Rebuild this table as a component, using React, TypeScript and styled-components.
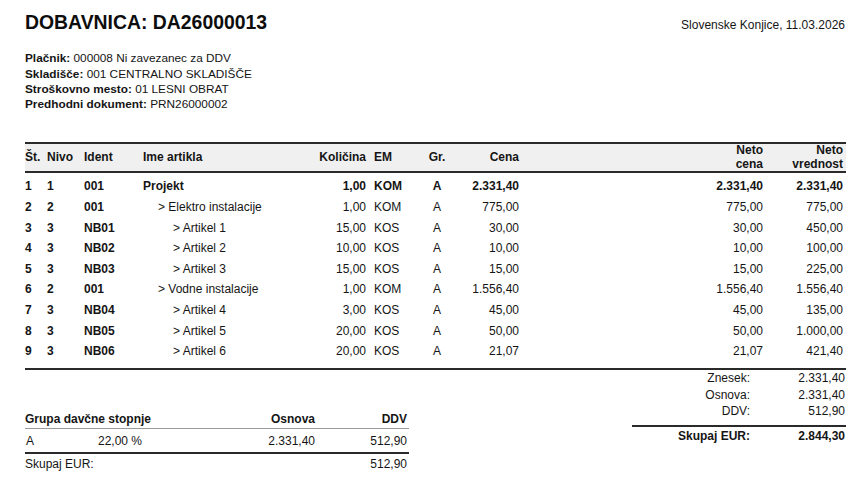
import React from 'react';
import styled, { createGlobalStyle } from 'styled-components';

const GlobalStyle = createGlobalStyle`
  html, body {
    margin: 0;
    padding: 0;
    background: #fff;
  }
  body {
    font-family: 'Liberation Sans', Arial, sans-serif;
    color: #151515;
  }
`;

type Item = {
  st: number;
  level: number;
  ident: string;
  name: string;
  qty: string;
  em: string;
  gr: string;
  price: string;
  netPrice: string;
  netValue: string;
};

const items: Item[] = [
  { st: 1, level: 1, ident: '001', name: 'Projekt', qty: '1,00', em: 'KOM', gr: 'A', price: '2.331,40', netPrice: '2.331,40', netValue: '2.331,40' },
  { st: 2, level: 2, ident: '001', name: 'Elektro instalacije', qty: '1,00', em: 'KOM', gr: 'A', price: '775,00', netPrice: '775,00', netValue: '775,00' },
  { st: 3, level: 3, ident: 'NB01', name: 'Artikel 1', qty: '15,00', em: 'KOS', gr: 'A', price: '30,00', netPrice: '30,00', netValue: '450,00' },
  { st: 4, level: 3, ident: 'NB02', name: 'Artikel 2', qty: '10,00', em: 'KOS', gr: 'A', price: '10,00', netPrice: '10,00', netValue: '100,00' },
  { st: 5, level: 3, ident: 'NB03', name: 'Artikel 3', qty: '15,00', em: 'KOS', gr: 'A', price: '15,00', netPrice: '15,00', netValue: '225,00' },
  { st: 6, level: 2, ident: '001', name: 'Vodne instalacije', qty: '1,00', em: 'KOM', gr: 'A', price: '1.556,40', netPrice: '1.556,40', netValue: '1.556,40' },
  { st: 7, level: 3, ident: 'NB04', name: 'Artikel 4', qty: '3,00', em: 'KOS', gr: 'A', price: '45,00', netPrice: '45,00', netValue: '135,00' },
  { st: 8, level: 3, ident: 'NB05', name: 'Artikel 5', qty: '20,00', em: 'KOS', gr: 'A', price: '50,00', netPrice: '50,00', netValue: '1.000,00' },
  { st: 9, level: 3, ident: 'NB06', name: 'Artikel 6', qty: '20,00', em: 'KOS', gr: 'A', price: '21,07', netPrice: '21,07', netValue: '421,40' },
];

const Page = styled.div`
  width: 821px;
  padding: 11px 0 0 25px;
  font-size: 12px;
`;

const Head = styled.div`
  display: flex;
  justify-content: space-between;
  align-items: baseline;
`;

const Title = styled.h1`
  margin: 0;
  font-size: 19.4px;
  line-height: 22px;
  font-weight: bold;
  color: #0d0d0d;
`;

const Place = styled.div`
  font-size: 12px;
  padding-right: 1px;
`;

const Info = styled.div`
  margin-top: 18.4px;
  line-height: 15.3px;
  font-size: 11.8px;
`;

const InfoLine = styled.div`
  b {
    font-weight: bold;
  }
`;

const Cols = `22px 37px 59px 160px 63px 54px 34px 66px 1fr 64px 82px`;

const ItemTable = styled.div`
  margin-top: 29.3px;
  border-bottom: 2px solid #2a2a2a;
  padding-bottom: 6px;
`;

const HeaderRow = styled.div`
  display: grid;
  grid-template-columns: ${Cols};
  height: 27.5px;
  align-items: center;
  background: #f0f0f0;
  border-top: 2px solid #2a2a2a;
  border-bottom: 2px solid #2a2a2a;
  font-weight: bold;
  line-height: 13.75px;
  margin-bottom: 3px;
`;

const BodyRow = styled.div<{ $bold?: boolean }>`
  display: grid;
  grid-template-columns: ${Cols};
  height: 20.6px;
  line-height: 20.6px;
  font-weight: ${(p) => (p.$bold ? 'bold' : 'normal')};
  white-space: nowrap;
`;

const Cell = styled.div<{ $align?: 'left' | 'right' | 'center'; $bold?: boolean; $pad?: number }>`
  text-align: ${(p) => p.$align || 'left'};
  font-weight: ${(p) => (p.$bold ? 'bold' : 'inherit')};
  padding-left: ${(p) => (p.$align === 'left' || !p.$align ? p.$pad || 0 : 0)}px;
  padding-right: ${(p) => (p.$align === 'right' ? p.$pad || 0 : 0)}px;
  white-space: nowrap;
`;

const Bottom = styled.div`
  display: flex;
  justify-content: space-between;
  align-items: flex-start;
`;

const TaxTable = styled.div`
  width: 384px;
  margin-top: 40.8px;
  line-height: 16px;
`;

const TaxCols = `73px 44px 173px 1fr`;

const TaxHead = styled.div`
  display: grid;
  grid-template-columns: ${TaxCols};
  font-weight: bold;
  padding-bottom: 1px;
  border-bottom: 1px solid #9a9a9a;
`;

const TaxRow = styled.div`
  display: grid;
  grid-template-columns: ${TaxCols};
  padding: 4px 0 3.2px;
  border-bottom: 2px solid #2a2a2a;
`;

const TaxTotal = styled.div`
  display: flex;
  justify-content: space-between;
  padding: 1.8px 2px 0 0;
`;

const Summary = styled.div`
  width: 214px;
  margin-top: 0.7px;
  line-height: 16.3px;
`;

const SumRow = styled.div<{ $total?: boolean }>`
  display: grid;
  grid-template-columns: 118px 1fr;
  font-weight: ${(p) => (p.$total ? 'bold' : 'normal')};
  padding-top: ${(p) => (p.$total ? '1px' : '0')};
`;

const SumRule = styled.div`
  margin-top: 6px;
  border-top: 2px solid #2a2a2a;
`;

const SumLabel = styled.span`
  text-align: right;
`;

const SumValue = styled.span`
  text-align: right;
  padding-right: 1px;
`;

export default function App() {
  return (
    <>
      <GlobalStyle />
      <Page>
        <Head>
          <Title>DOBAVNICA: DA26000013</Title>
          <Place>Slovenske Konjice, 11.03.2026</Place>
        </Head>
        <Info>
          <InfoLine><b>Plačnik:</b> 000008 Ni zavezanec za DDV</InfoLine>
          <InfoLine><b>Skladišče:</b> 001 CENTRALNO SKLADIŠČE</InfoLine>
          <InfoLine><b>Stroškovno mesto:</b> 01 LESNI OBRAT</InfoLine>
          <InfoLine><b>Predhodni dokument:</b> PRN26000002</InfoLine>
        </Info>

        <ItemTable>
          <HeaderRow>
            <Cell>Št.</Cell>
            <Cell>Nivo</Cell>
            <Cell>Ident</Cell>
            <Cell>Ime artikla</Cell>
            <Cell $align="right">Količina</Cell>
            <Cell $pad={8}>EM</Cell>
            <Cell $align="center">Gr.</Cell>
            <Cell $align="right" $pad={1}>Cena</Cell>
            <Cell />
            <Cell $align="right" $pad={1}>Neto<br />cena</Cell>
            <Cell $align="right" $pad={3}>Neto<br />vrednost</Cell>
          </HeaderRow>
          {items.map((it) => (
            <BodyRow key={it.st} $bold={it.level === 1}>
              <Cell $bold>{it.st}</Cell>
              <Cell $bold>{it.level}</Cell>
              <Cell $bold>{it.ident}</Cell>
              <Cell $pad={(it.level - 1) * 15}>{it.level > 1 ? `> ${it.name}` : it.name}</Cell>
              <Cell $align="right">{it.qty}</Cell>
              <Cell $pad={8}>{it.em}</Cell>
              <Cell $align="center">{it.gr}</Cell>
              <Cell $align="right" $pad={1}>{it.price}</Cell>
              <Cell />
              <Cell $align="right" $pad={1}>{it.netPrice}</Cell>
              <Cell $align="right" $pad={3}>{it.netValue}</Cell>
            </BodyRow>
          ))}
        </ItemTable>

        <Bottom>
          <TaxTable>
            <TaxHead>
              <Cell>Grupa davčne stopnje</Cell>
              <Cell />
              <Cell $align="right">Osnova</Cell>
              <Cell $align="right" $pad={2}>DDV</Cell>
            </TaxHead>
            <TaxRow>
              <Cell $pad={1}>A</Cell>
              <Cell $align="right">22,00 %</Cell>
              <Cell $align="right">2.331,40</Cell>
              <Cell $align="right" $pad={2}>512,90</Cell>
            </TaxRow>
            <TaxTotal>
              <span>Skupaj EUR:</span>
              <span>512,90</span>
            </TaxTotal>
          </TaxTable>

          <Summary>
            <SumRow><SumLabel>Znesek:</SumLabel><SumValue>2.331,40</SumValue></SumRow>
            <SumRow><SumLabel>Osnova:</SumLabel><SumValue>2.331,40</SumValue></SumRow>
            <SumRow><SumLabel>DDV:</SumLabel><SumValue>512,90</SumValue></SumRow>
            <SumRule />
            <SumRow $total><SumLabel>Skupaj EUR:</SumLabel><SumValue>2.844,30</SumValue></SumRow>
          </Summary>
        </Bottom>
      </Page>
    </>
  );
}
